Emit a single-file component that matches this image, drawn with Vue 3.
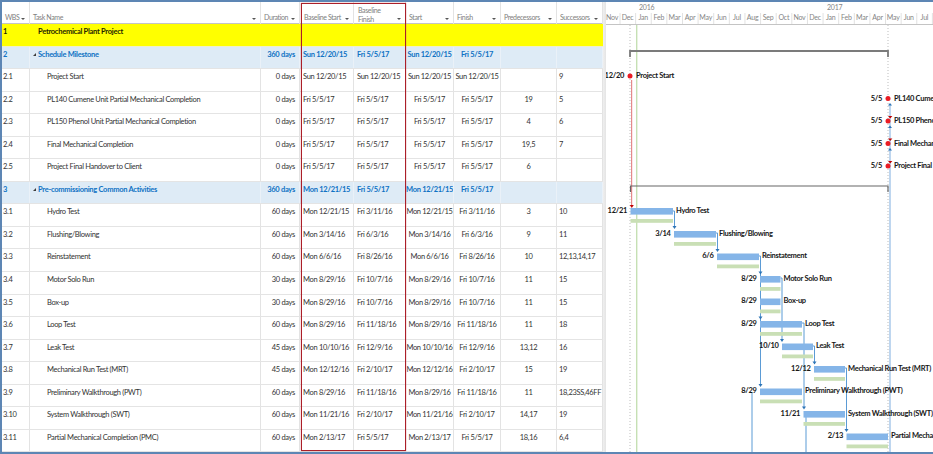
<script setup>
const columns = [
  { key: 'wbs', label: 'WBS' },
  { key: 'task', label: 'Task Name' },
  { key: 'dur', label: 'Duration' },
  { key: 'bs', label: 'Baseline Start' },
  { key: 'bf', label: 'Baseline Finish', wrap: true },
  { key: 'start', label: 'Start' },
  { key: 'finish', label: 'Finish' },
  { key: 'pred', label: 'Predecessors' },
  { key: 'succ', label: 'Successors' },
]

const leaf = (wbs, task, dur, bs, bf, pred, succ) => ({ wbs, task, dur, bs, bf, start: bs, finish: bf, pred, succ })

const rows = [
  { wbs: '1', task: 'Petrochemical Plant Project', kind: 'project' },
  { wbs: '2', task: 'Schedule Milestone', dur: '360 days', bs: 'Sun 12/20/15', bf: 'Fri 5/5/17', start: 'Sun 12/20/15', finish: 'Fri 5/5/17', kind: 'summary' },
  leaf('2.1', 'Project Start', '0 days', 'Sun 12/20/15', 'Sun 12/20/15', '', '9'),
  leaf('2.2', 'PL140 Cumene Unit Partial Mechanical Completion', '0 days', 'Fri 5/5/17', 'Fri 5/5/17', '19', '5'),
  leaf('2.3', 'PL150 Phenol Unit Partial Mechanical Completion', '0 days', 'Fri 5/5/17', 'Fri 5/5/17', '4', '6'),
  leaf('2.4', 'Final Mechanical Completion', '0 days', 'Fri 5/5/17', 'Fri 5/5/17', '19,5', '7'),
  leaf('2.5', 'Project Final Handover to Client', '0 days', 'Fri 5/5/17', 'Fri 5/5/17', '6', ''),
  { wbs: '3', task: 'Pre-commissioning Common Activities', dur: '360 days', bs: 'Mon 12/21/15', bf: 'Fri 5/5/17', start: 'Mon 12/21/15', finish: 'Fri 5/5/17', kind: 'summary' },
  leaf('3.1', 'Hydro Test', '60 days', 'Mon 12/21/15', 'Fri 3/11/16', '3', '10'),
  leaf('3.2', 'Flushing/Blowing', '60 days', 'Mon 3/14/16', 'Fri 6/3/16', '9', '11'),
  leaf('3.3', 'Reinstatement', '60 days', 'Mon 6/6/16', 'Fri 8/26/16', '10', '12,13,14,17'),
  leaf('3.4', 'Motor Solo Run', '30 days', 'Mon 8/29/16', 'Fri 10/7/16', '11', '15'),
  leaf('3.5', 'Box-up', '30 days', 'Mon 8/29/16', 'Fri 10/7/16', '11', '15'),
  leaf('3.6', 'Loop Test', '60 days', 'Mon 8/29/16', 'Fri 11/18/16', '11', '18'),
  leaf('3.7', 'Leak Test', '45 days', 'Mon 10/10/16', 'Fri 12/9/16', '13,12', '16'),
  leaf('3.8', 'Mechanical Run Test (MRT)', '45 days', 'Mon 12/12/16', 'Fri 2/10/17', '15', '19'),
  leaf('3.9', 'Preliminary Walkthrough (PWT)', '60 days', 'Mon 8/29/16', 'Fri 11/18/16', '11', '18,23SS,46FF'),
  leaf('3.10', 'System Walkthrough (SWT)', '60 days', 'Mon 11/21/16', 'Fri 2/10/17', '14,17', '19'),
  leaf('3.11', 'Partial Mechanical Completion (PMC)', '60 days', 'Mon 2/13/17', 'Fri 5/5/17', '18,16', '6,4'),
]

const months = ['Nov', 'Dec', 'Jan', 'Feb', 'Mar', 'Apr', 'May', 'Jun', 'Jul', 'Aug', 'Sep', 'Oct', 'Nov', 'Dec', 'Jan', 'Feb', 'Mar', 'Apr', 'May', 'Jun', 'Jul']
  .map((label, i) => ({ label, x: 612 + i * 15.62, sep: 620 + i * 15.62 }))

const bars = [
  { date: '12/21', name: 'Hydro Test', x1: 630.5, x2: 673, y: 208 },
  { date: '3/14', name: 'Flushing/Blowing', x1: 674, x2: 716, y: 231 },
  { date: '6/6', name: 'Reinstatement', x1: 717, x2: 759, y: 253.5 },
  { date: '8/29', name: 'Motor Solo Run', x1: 760, x2: 780.5, y: 276 },
  { date: '8/29', name: 'Box-up', x1: 760, x2: 780.5, y: 298.5 },
  { date: '8/29', name: 'Loop Test', x1: 760, x2: 802, y: 321 },
  { date: '10/10', name: 'Leak Test', x1: 782, x2: 813, y: 343.5 },
  { date: '12/12', name: 'Mechanical Run Test (MRT)', x1: 814, x2: 845, y: 366 },
  { date: '8/29', name: 'Preliminary Walkthrough (PWT)', x1: 760, x2: 802, y: 388.5 },
  { date: '11/21', name: 'System Walkthrough (SWT)', x1: 803.5, x2: 845, y: 411 },
  { date: '2/13', name: 'Partial Mechanical Completion (PMC)', x1: 846.5, x2: 888, y: 433.5 },
]

const milestones = [
  { date: '12/20', name: 'Project Start', x: 630, y: 76 },
  { date: '5/5', name: 'PL140 Cumene Unit Partial Mechanical Completion', x: 888, y: 98.5 },
  { date: '5/5', name: 'PL150 Phenol Unit Partial Mechanical Completion', x: 888, y: 121 },
  { date: '5/5', name: 'Final Mechanical Completion', x: 888, y: 143.5 },
  { date: '5/5', name: 'Project Final Handover to Client', x: 888, y: 166 },
]

const links = [
  { x: 760.5, y1: 256, y2: 386, from: 759 },
  { x: 674.5, y1: 211, y2: 228, from: 673 },
  { x: 717.5, y1: 233, y2: 251, from: 716 },
  { x: 782, y1: 278, y2: 341, from: 780.5 },
  { x: 804, y1: 323, y2: 408, from: 802 },
  { x: 814.5, y1: 346, y2: 364, from: 813 },
  { x: 846.5, y1: 368, y2: 431, from: 845 },
]
const downArrows = [
  { x: 760.5, y: 273.5 }, { x: 760.5, y: 318.5 }, { x: 760.5, y: 386 },
  { x: 782, y: 341 }, { x: 804, y: 408.5 }, { x: 814.5, y: 363.5 },
  { x: 846.5, y: 431 }, { x: 674.5, y: 228 }, { x: 717.5, y: 251 },
]
const redFlags = [116, 138.5, 161]
const arrowPoints = (x, y) => `${x - 2},${y - 2} ${x + 2},${y - 2} ${x},${y + 1}`
</script>

<template>
  <div class="frame">
    <div class="sheet">
      <div class="head">
        <div v-for="col in columns" :key="col.key" class="hcell" :class="col.key">
          <span class="hlabel" :class="{ wrap: col.wrap }">{{ col.label }}</span>
          <i class="caret"></i>
        </div>
      </div>
      <div v-for="row in rows" :key="row.wbs" class="row" :class="row.kind">
        <div class="cell wbs">{{ row.wbs }}</div>
        <div class="cell task">
          <i v-if="row.kind === 'summary'" class="twisty"></i>{{ row.task }}
        </div>
        <div class="cell dur">{{ row.dur }}</div>
        <div class="cell bs">{{ row.bs }}</div>
        <div class="cell bf">{{ row.bf }}</div>
        <div class="cell start">{{ row.start }}</div>
        <div class="cell finish">{{ row.finish }}</div>
        <div class="cell pred">{{ row.pred }}</div>
        <div class="cell succ">{{ row.succ }}</div>
      </div>
      <div class="highlight"></div>
    </div>
    <div class="splitter"></div>
    <div class="gantt">
      <svg class="chart" viewBox="606 2 327 450" width="327" height="450">
        <line x1="606" y1="24.5" x2="933" y2="24.5" stroke="#c4c4c4" />
        <text x="639" y="10" class="year">2016</text>
        <text x="827" y="10" class="year">2017</text>
        <g v-for="m in months" :key="m.sep">
          <text :x="m.x" y="19.5" class="month" text-anchor="middle">{{ m.label }}</text>
          <line :x1="m.sep" y1="13" :x2="m.sep" y2="24" stroke="#e2e2e2" />
        </g>

        <line x1="630" y1="25" x2="630" y2="452" stroke="#bdbdbd" stroke-dasharray="1 2" />
        <line x1="888" y1="25" x2="888" y2="452" stroke="#bdbdbd" stroke-dasharray="1 2" />
        <line x1="636.7" y1="25" x2="636.7" y2="452" stroke="#c6e0b4" stroke-width="1.4" />
        <line x1="890" y1="104" x2="890" y2="452" stroke="#a9c9ea" stroke-width="1.5" />
        <line x1="631.6" y1="80" x2="631.6" y2="205" stroke="#e58a8a" stroke-width="1.2" />
        <polygon :points="arrowPoints(631.8, 207)" fill="#c00000" />

        <path d="M630 57 V51 H888 V57" fill="none" stroke="#7b7b7b" stroke-width="1.8" />
        <path d="M630.5 192 V186 H888 V192" fill="none" stroke="#666" stroke-width="1.2" />

        <line x1="752" y1="393" x2="752" y2="452" stroke="#5b9bd5" />
        <line x1="806" y1="417" x2="806" y2="452" stroke="#5b9bd5" />
        <g v-for="l in links" :key="l.x">
          <path :d="`M${l.from} ${l.y1} H${l.x} V${l.y2}`" fill="none" stroke="#5b9bd5" />
        </g>
        <polygon v-for="a in downArrows" :key="a.x + '-' + a.y" :points="arrowPoints(a.x, a.y)" fill="#2e75b6" />

        <g v-for="b in bars" :key="b.name">
          <rect :x="b.x1" :y="b.y" :width="b.x2 - b.x1" height="6.6" fill="#85b5e8" />
          <rect :x="b.x1" :y="b.y + 11" :width="b.x2 - b.x1" height="3.8" fill="#c9dfb5" />
          <text :x="b.x1 - 3.5" :y="b.y + 4.5" class="tag" text-anchor="end">{{ b.date }}</text>
          <text :x="b.x2 + 3" :y="b.y + 4.5" class="tag">{{ b.name }}</text>
        </g>

        <polygon points="888,105.5 892,105.5 890,103" fill="#2e75b6" />
        <polygon points="888,128 892,128 890,125.5" fill="#2e75b6" />
        <polygon points="888,150.5 892,150.5 890,148" fill="#2e75b6" />
        <polygon v-for="y in redFlags" :key="y" :points="`888,${y} 892.4,${y} 890.2,${y + 2.6}`" fill="#c00000" />

        <g v-for="m in milestones" :key="m.name">
          <circle :cx="m.x" :cy="m.y" r="2.5" fill="#ea1c24" />
          <text :x="m.x - 6" :y="m.y + 2" class="tag" text-anchor="end">{{ m.date }}</text>
          <text :x="m.x + 6" :y="m.y + 2" class="tag">{{ m.name }}</text>
        </g>
      </svg>
    </div>
  </div>
</template>

<style>
html, body { margin: 0; background: #fff; }
</style>

<style scoped>
.frame {
  width: 933px;
  height: 454px;
  box-sizing: border-box;
  border: solid #5d86b4;
  border-width: 2px 0 2px 2px;
  display: flex;
  overflow: hidden;
  background: #fff;
  font-family: Lato, "Liberation Sans", sans-serif;
  font-size: 7.5px;
  letter-spacing: -0.33px;
  color: #333;
}
.sheet {
  position: relative;
  width: 601px;
  flex: none;
}
.head, .row {
  display: grid;
  grid-template-columns: 28px 231px 39px 54px 52px 48px 47px 56px 46px;
}
.head {
  height: 22px;
  border-bottom: 1px solid #c4c4c4;
  box-sizing: border-box;
}
.hcell {
  display: flex;
  align-items: center;
  justify-content: space-between;
  padding: 9px 4px 0 3px;
  color: #808080;
  font-size: 7px;
  letter-spacing: -0.38px;
  border-right: 1px solid #e3e3e3;
  min-width: 0;
  line-height: 9px;
  box-sizing: border-box;
}
.hlabel { white-space: nowrap; }
.hlabel.wrap { white-space: normal; width: 30px; margin-top: -5px; }
.hcell.bs, .hcell.bf { padding-left: 4px; }
.caret {
  flex: none;
  width: 0;
  height: 0;
  border-left: 2px solid transparent;
  border-right: 2px solid transparent;
  border-top: 2.5px solid #555;
  margin-top: 2px;
}
.row {
  height: 22.55px;
  box-sizing: border-box;
  border-bottom: 1px solid #e4e4e4;
}
.cell {
  padding: 3px 2px 0;
  line-height: 10px;
  white-space: nowrap;
  overflow: hidden;
  border-right: 1px solid #e3e3e3;
  box-sizing: border-box;
}
.cell.wbs { padding-left: 1px; }
.cell.task { padding-left: 17px; }
.cell.dur { text-align: right; padding-right: 4px; }
.cell.bs, .cell.bf { padding-left: 3px; }
.cell.start, .cell.finish, .cell.pred { text-align: center; padding-left: 0; padding-right: 0; }
.cell.succ { padding-left: 2px; }

.row.project {
  background: #ffff00;
  font-weight: 700;
  letter-spacing: -0.27px;
  color: #1f1f00;
  border-bottom-color: #f0f0c8;
}
.row.project .cell { border-right-color: transparent; }
.row.project .task { padding-left: 8px; }
.row.summary {
  background: #deebf6;
  color: #0e72c4;
  font-weight: 700;
  letter-spacing: -0.27px;
}
.row.summary .cell { border-right-color: #eaf1f8; }
.row.summary .task { padding-left: 3px; }
.twisty {
  display: inline-block;
  width: 0;
  height: 0;
  margin-right: 2px;
  vertical-align: 1px;
  border-left: 3px solid transparent;
  border-bottom: 3px solid #3c3c3c;
}
.highlight {
  position: absolute;
  left: 299px;
  top: 1px;
  width: 105px;
  height: 448px;
  box-sizing: border-box;
  border: 1px solid #ab1f29;
  box-shadow: 0 0 1px #c4545c;
  pointer-events: none;
}
.splitter {
  flex: none;
  width: 3px;
  background: linear-gradient(90deg, #efefef, #e4e4e4);
}
.gantt {
  flex: 1;
  position: relative;
  overflow: hidden;
}
.chart { display: block; }
.year, .month {
  font-size: 7px;
  letter-spacing: -0.2px;
  fill: #858585;
}
.tag {
  font-size: 7.5px;
  font-weight: 700;
  letter-spacing: -0.3px;
  fill: #161616;
}
</style>
